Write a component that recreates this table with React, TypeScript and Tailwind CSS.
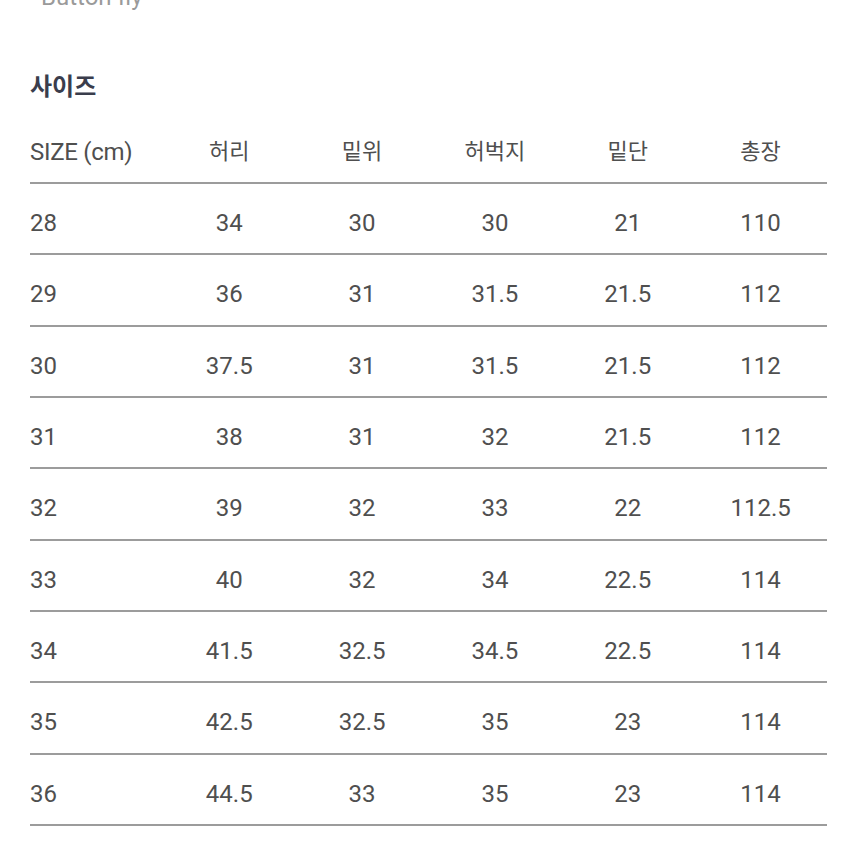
const headers = ["허리", "밑위", "허벅지", "밑단", "총장"];

const rows: string[][] = [
  ["28", "34", "30", "30", "21", "110"],
  ["29", "36", "31", "31.5", "21.5", "112"],
  ["30", "37.5", "31", "31.5", "21.5", "112"],
  ["31", "38", "31", "32", "21.5", "112"],
  ["32", "39", "32", "33", "22", "112.5"],
  ["33", "40", "32", "34", "22.5", "114"],
  ["34", "41.5", "32.5", "34.5", "22.5", "114"],
  ["35", "42.5", "32.5", "35", "23", "114"],
  ["36", "44.5", "33", "35", "23", "114"],
  ["37", "46", "33", "35.5", "23.5", "116"],
];

export default function App() {
  return (
    <div className="h-[856px] w-[856px] overflow-hidden bg-white font-['Roboto','Noto_Sans_CJK_KR',sans-serif] text-[#4f4f4f]">
      <div className="pl-[30px] pr-[29px]">
        <p className="-mt-[19px] pl-[11px] text-[24px] leading-[32px] text-[#9a9a9a]">Button fly</p>

        <h2 className="mt-[58px] text-[24px] leading-[32px] font-bold text-[#3a3d4c]">사이즈</h2>

        <div className="mt-[33px]">
          <div className="grid grid-cols-6 border-b-2 border-[#9c9c9c] pb-[14px] leading-[32px]">
            <div className="text-[24px] tracking-[-0.3px]">SIZE (cm)</div>
            {headers.map((h) => (
              <div key={h} className="text-center text-[22px]">
                {h}
              </div>
            ))}
          </div>

          {rows.map((r) => (
            <div key={r[0]} className="grid h-[71.33px] grid-cols-6 border-b-2 border-[#9c9c9c] pt-[23px] text-[24px] leading-[32px]">
              {r.map((v, i) => (
                <div key={i} className={i === 0 ? "text-left" : "text-center"}>
                  {v}
                </div>
              ))}
            </div>
          ))}
        </div>
      </div>
    </div>
  );
}
